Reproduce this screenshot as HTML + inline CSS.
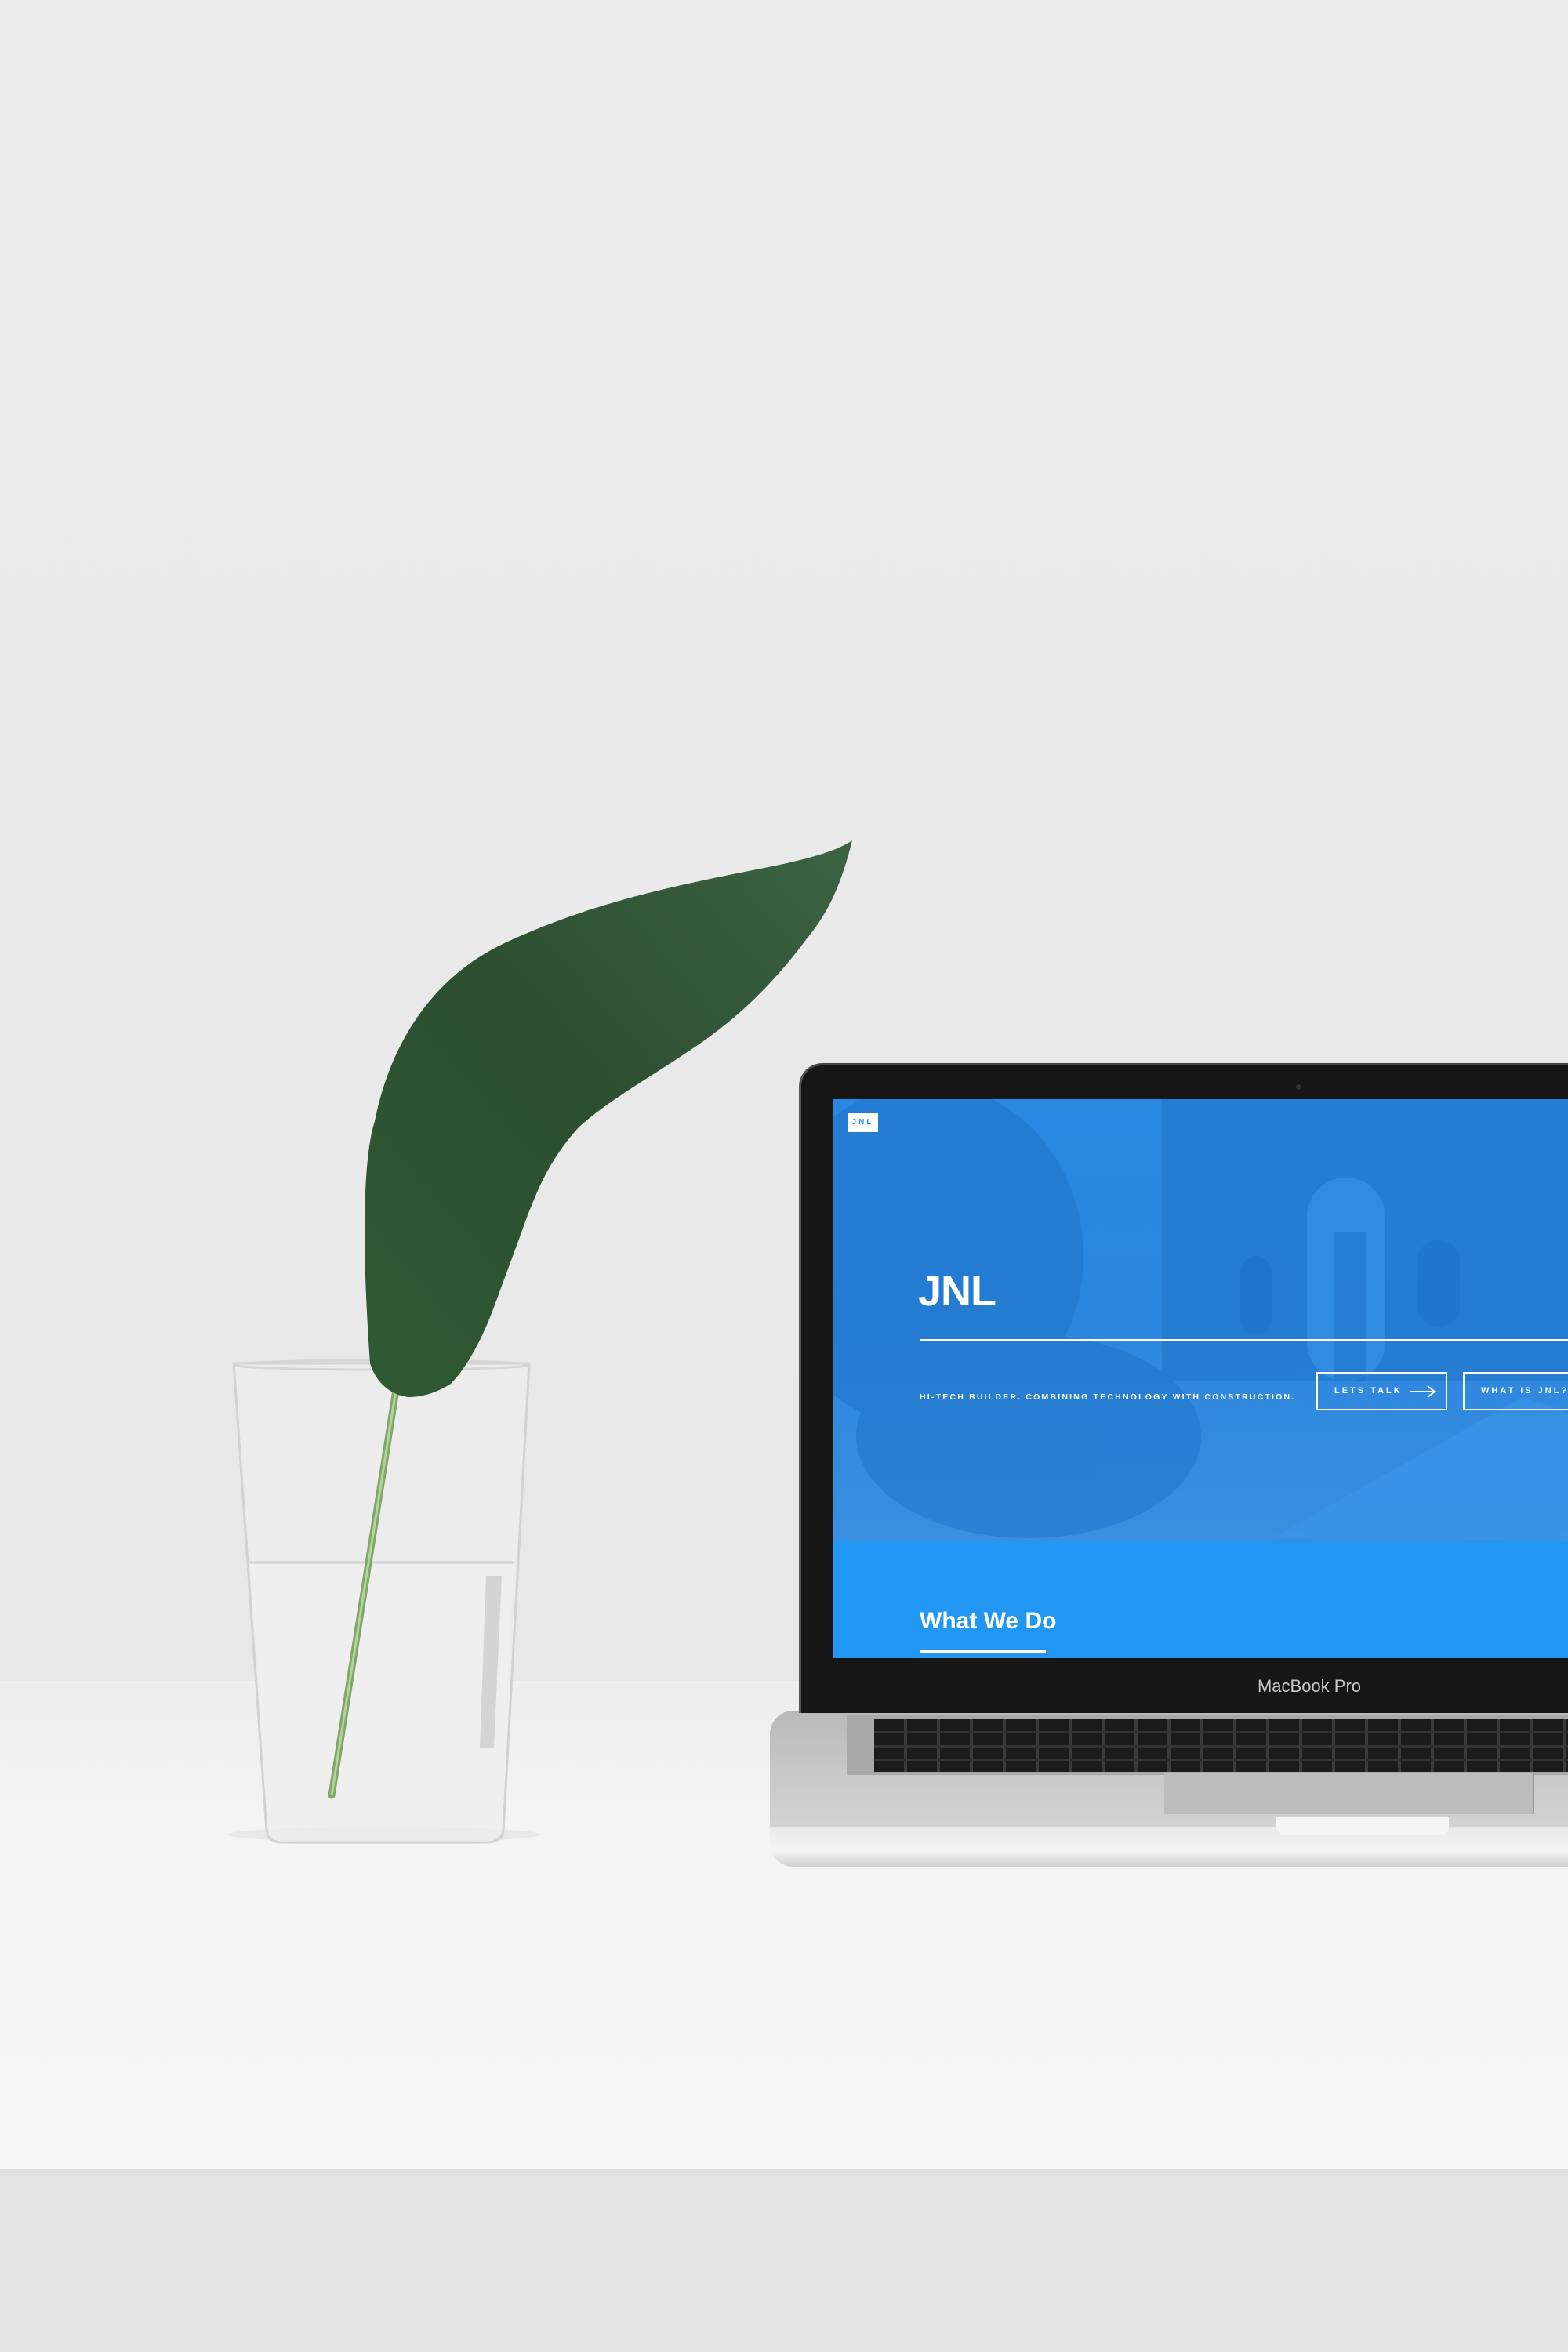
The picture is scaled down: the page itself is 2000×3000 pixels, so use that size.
<!DOCTYPE html>
<html><head><meta charset="utf-8"><style>
html,body{margin:0;padding:0}
body{width:2000px;height:3000px;position:relative;overflow:hidden;background:linear-gradient(180deg,#ececec 0,#e9e9e9 1500px,#e8e8e8 2144px);font-family:"Liberation Sans",sans-serif}
.abs{position:absolute}
</style></head><body>
<!-- table -->
<div class="abs" style="left:0;top:2144px;width:2000px;height:622px;background:linear-gradient(180deg,#eeeeee 0,#f4f4f4 200px,#f6f6f6 600px)"></div>
<div class="abs" style="left:0;top:2766px;width:2000px;height:234px;background:linear-gradient(180deg,#dcdcdc 0,#e4e4e4 10px,#e6e6e6 234px)"></div>

<!-- plant + glass -->
<svg class="abs" style="left:0;top:0" width="1200" height="2400" viewBox="0 0 1200 2400">
 <defs>
  <linearGradient id="lf" x1="0" y1="1" x2="1" y2="0">
   <stop offset="0" stop-color="#2f5a33"/><stop offset="0.5" stop-color="#2c4f30"/><stop offset="1" stop-color="#3c6343"/>
  </linearGradient>
 </defs>
 <ellipse cx="490" cy="2340" rx="200" ry="10" fill="#e2e2e2" opacity="0.7"/>
 <!-- glass body -->
 <path d="M298 1739 L675 1739 L642 2335 Q640 2350 620 2350 L360 2350 Q342 2350 340 2335 Z" fill="#eeeeee" fill-opacity="0.6" stroke="#d2d2d2" stroke-width="3"/>
 <path d="M318 1993 L655 1993 L640 2330 L345 2330 Z" fill="#efefef"/>
 <line x1="318" y1="1993" x2="655" y2="1993" stroke="#cfcfcf" stroke-width="3"/>
 <ellipse cx="486" cy="1741" rx="188" ry="6" fill="none" stroke="#d6d6d6" stroke-width="3"/>
 <path d="M620 2010 L640 2010 L630 2230 L612 2230 Z" fill="#c9c9c9" opacity="0.7"/>
 <!-- stem -->
 <path d="M505 1773 Q470 1990 423 2290" stroke="#7ea866" stroke-width="9" fill="none" stroke-linecap="round"/>
 <path d="M505 1773 Q470 1990 423 2290" stroke="#b5d39a" stroke-width="3" fill="none"/>
 <!-- leaf -->
 <path d="M472 1739 C462 1600 462 1480 478 1430 C500 1320 560 1240 650 1200 C760 1150 860 1130 960 1110 C1010 1100 1060 1090 1087 1072 C1075 1120 1060 1160 1030 1196 C990 1250 950 1290 900 1326 C830 1375 780 1400 738 1438 C700 1480 685 1520 673 1550 C655 1600 640 1640 629 1670 C610 1720 590 1750 575 1765 C555 1778 535 1782 521 1782 C500 1780 480 1765 472 1739 Z" fill="url(#lf)"/>
</svg>

<!-- laptop base -->
<div class="abs" style="left:982px;top:2182px;width:1100px;height:199px;background:linear-gradient(180deg,#b9b9b9 0,#c8c8c8 40%,#d6d6d6 85%,#bdbdbd 100%);border-radius:30px 0 0 30px"></div>
<div class="abs" style="left:982px;top:2330px;width:1100px;height:51px;background:linear-gradient(180deg,#e9e9e9,#f4f4f4 60%,#cfcfcf);border-radius:0 0 0 30px"></div>
<div class="abs" style="left:1080px;top:2188px;width:1000px;height:76px;background:#a9a9a9"></div>
<div class="abs" style="left:1115px;top:2192px;width:900px;height:68px;background:repeating-linear-gradient(90deg,#1b1b1b 0,#1b1b1b 38px,#3a3a3a 38px,#3a3a3a 42px),#1b1b1b"></div>
<div class="abs" style="left:1115px;top:2208px;width:900px;height:3px;background:#333"></div>
<div class="abs" style="left:1115px;top:2226px;width:900px;height:3px;background:#333"></div>
<div class="abs" style="left:1115px;top:2243px;width:900px;height:3px;background:#333"></div>
<div class="abs" style="left:1485px;top:2262px;width:470px;height:52px;background:#bdbdbd;border-right:2px solid #9a9a9a"></div>
<div class="abs" style="left:1628px;top:2318px;width:220px;height:22px;background:#f5f5f5;border-radius:0 0 10px 10px"></div>

<!-- bezel -->
<div class="abs" style="left:1019px;top:1356px;width:1100px;height:826px;background:#161616;border-radius:30px 0 0 0;border-left:3px solid #555;border-top:3px solid #444"></div>
<div class="abs" style="left:1653px;top:1383px;width:7px;height:7px;border-radius:50%;background:#333"></div>
<div class="abs" style="left:1570px;top:2138px;width:200px;text-align:center;color:#c8c8c8;font-size:22px">MacBook Pro</div>

<!-- screen -->
<div class="abs" style="left:1062px;top:1402px;width:940px;height:713px;overflow:hidden;background:#2196f3">
 <div class="abs" style="left:0;top:0;width:940px;height:563px;background:linear-gradient(180deg,#2a88e2 0,#2b86de 50%,#3a8fde 100%)"></div>
 <svg class="abs" style="left:0;top:0" width="940" height="563">
  <g fill="#1f74c8" opacity="0.55">
   <ellipse cx="120" cy="200" rx="200" ry="220"/>
   <ellipse cx="250" cy="430" rx="220" ry="130"/>
   <rect x="420" y="0" width="520" height="360"/>
  </g>
  <g fill="#3a96ea" opacity="0.6">
   <path d="M560 560 L880 380 L940 400 L940 563 Z"/>
   <rect x="605" y="100" width="100" height="260" rx="50"/>
  </g>
  <g fill="#1c6fc4" opacity="0.5">
   <rect x="640" y="170" width="40" height="190"/>
   <rect x="745" y="180" width="55" height="110" rx="27"/>
   <rect x="520" y="200" width="40" height="100" rx="20"/>
  </g>
 </svg>
 <div class="abs" style="left:19px;top:18px;width:39px;height:24px;background:#fff;color:#2196f3;font-size:10px;font-weight:bold;letter-spacing:3px;line-height:24px;text-align:center">JNL</div>
 <div class="abs" style="left:109px;top:210px;color:#fff;font-size:54px;font-weight:bold;line-height:70px;letter-spacing:-1px">JNL</div>
 <div class="abs" style="left:111px;top:306px;width:900px;height:3px;background:#fff"></div>
 <div class="abs" style="left:111px;top:374px;color:#fff;font-size:10.5px;font-weight:bold;letter-spacing:2.2px;white-space:nowrap">HI-TECH BUILDER. COMBINING TECHNOLOGY WITH CONSTRUCTION.</div>
 <div class="abs" style="left:617px;top:348px;width:167px;height:49px;border:2px solid #fff;box-sizing:border-box;color:#fff;font-size:11px;font-weight:bold;letter-spacing:3px;line-height:45px;padding-left:21px">LETS TALK
  <svg style="position:absolute;left:116px;top:15px" width="36" height="16"><path d="M1 8 H33 M24 1 L33 8 L24 15" stroke="#fff" stroke-width="2" fill="none"/></svg></div>
 <div class="abs" style="left:804px;top:348px;width:200px;height:49px;border:2px solid #fff;box-sizing:border-box;color:#fff;font-size:11px;font-weight:bold;letter-spacing:3px;line-height:45px;padding-left:21px;white-space:nowrap">WHAT IS JNL?</div>
 <div class="abs" style="left:111px;top:646px;color:#fff;font-size:30px;font-weight:bold;line-height:40px">What We Do</div>
 <div class="abs" style="left:111px;top:703px;width:161px;height:3px;background:#fff"></div>
</div>
</body></html>
